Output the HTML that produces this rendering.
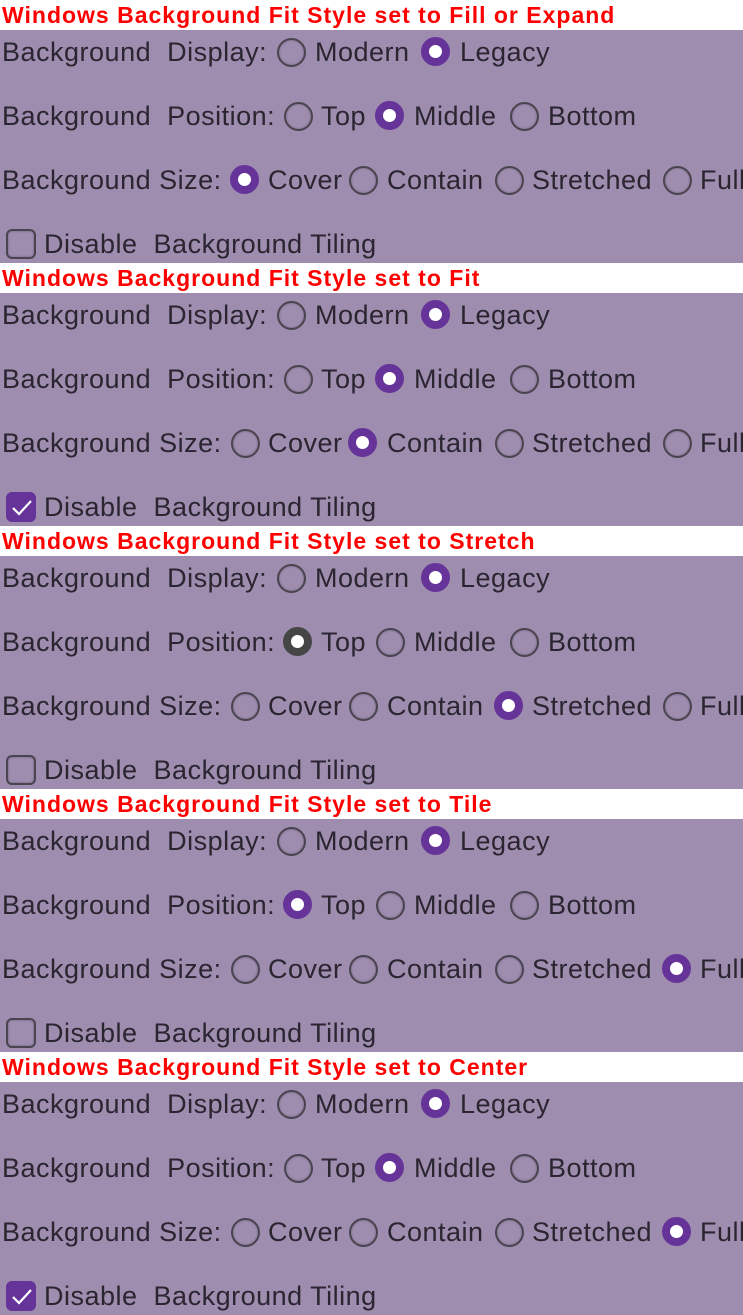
<!DOCTYPE html>
<html><head><meta charset="utf-8"><style>
*{margin:0;padding:0;box-sizing:border-box}
body{width:743px;height:1315px;background:#9f8daf;position:relative;overflow:hidden;font-family:"Liberation Sans",sans-serif}
.s{position:absolute;left:0;width:743px;height:263px}
.h{position:absolute;left:0;top:0;width:743px;height:30px;background:#fff;color:#f00;font:bold 23px/30px "Liberation Sans",sans-serif;padding-left:2px;white-space:nowrap;letter-spacing:1px}
.p{position:absolute;left:0;top:30px;width:743px;height:233px;background:#9f8daf}
.t{position:absolute;font-size:27px;line-height:32px;color:#2a2530;white-space:nowrap;letter-spacing:0.5px}
.r{position:absolute;width:29px;height:29px;border-radius:50%;border:2px solid #4a4450;box-shadow:inset 0 0 2px rgba(0,0,0,.35)}
.r.c{border:8px solid #663399;background:#fff;box-shadow:none}
.r.d{border:8px solid #454545;background:#fff;box-shadow:none}
.b{position:absolute;left:6px;width:30px;height:30px;border-radius:6px;border:2px solid #4a4450;box-shadow:inset 0 0 2px rgba(0,0,0,.35)}
.b.c{background:#663399;border-color:#663399;box-shadow:none}
.b.c svg{position:absolute;left:3px;top:4px}
</style></head><body>

<div class="s" style="top:0">
<div class="h">Windows Background Fit Style set to Fill or Expand</div><div class="p"></div>
<div class="t" style="left:2px;top:36px">Background&nbsp; Display:</div>
<div class="r" style="left:277px;top:38px"></div><div class="t" style="left:315px;top:36px">Modern</div>
<div class="r c" style="left:421px;top:37px"></div><div class="t" style="left:460px;top:36px">Legacy</div>
<div class="t" style="left:2px;top:100px">Background&nbsp; Position:</div>
<div class="r" style="left:284px;top:102px"></div><div class="t" style="left:321px;top:100px">Top</div>
<div class="r c" style="left:375px;top:101px"></div><div class="t" style="left:414px;top:100px">Middle</div>
<div class="r" style="left:510px;top:102px"></div><div class="t" style="left:548px;top:100px">Bottom</div>
<div class="t" style="left:2px;top:164px">Background Size:</div>
<div class="r c" style="left:230px;top:165px"></div><div class="t" style="left:268px;top:164px">Cover</div>
<div class="r" style="left:349px;top:166px"></div><div class="t" style="left:387px;top:164px">Contain</div>
<div class="r" style="left:495px;top:166px"></div><div class="t" style="left:532px;top:164px">Stretched</div>
<div class="r" style="left:663px;top:166px"></div><div class="t" style="left:700px;top:164px">Full</div>
<div class="b" style="top:229px"></div><div class="t" style="left:44px;top:228px">Disable&nbsp; Background Tiling</div>
</div>

<div class="s" style="top:263px">
<div class="h">Windows Background Fit Style set to Fit</div><div class="p"></div>
<div class="t" style="left:2px;top:36px">Background&nbsp; Display:</div>
<div class="r" style="left:277px;top:38px"></div><div class="t" style="left:315px;top:36px">Modern</div>
<div class="r c" style="left:421px;top:37px"></div><div class="t" style="left:460px;top:36px">Legacy</div>
<div class="t" style="left:2px;top:100px">Background&nbsp; Position:</div>
<div class="r" style="left:284px;top:102px"></div><div class="t" style="left:321px;top:100px">Top</div>
<div class="r c" style="left:375px;top:101px"></div><div class="t" style="left:414px;top:100px">Middle</div>
<div class="r" style="left:510px;top:102px"></div><div class="t" style="left:548px;top:100px">Bottom</div>
<div class="t" style="left:2px;top:164px">Background Size:</div>
<div class="r" style="left:231px;top:166px"></div><div class="t" style="left:268px;top:164px">Cover</div>
<div class="r c" style="left:348px;top:165px"></div><div class="t" style="left:387px;top:164px">Contain</div>
<div class="r" style="left:495px;top:166px"></div><div class="t" style="left:532px;top:164px">Stretched</div>
<div class="r" style="left:663px;top:166px"></div><div class="t" style="left:700px;top:164px">Full</div>
<div class="b c" style="top:229px"><svg width="22" height="20" viewBox="0 0 22 20"><path d="M2 10 L8 16 L20 3" fill="none" stroke="#fff" stroke-width="2.2"/></svg></div><div class="t" style="left:44px;top:228px">Disable&nbsp; Background Tiling</div>
</div>

<div class="s" style="top:526px">
<div class="h">Windows Background Fit Style set to Stretch</div><div class="p"></div>
<div class="t" style="left:2px;top:36px">Background&nbsp; Display:</div>
<div class="r" style="left:277px;top:38px"></div><div class="t" style="left:315px;top:36px">Modern</div>
<div class="r c" style="left:421px;top:37px"></div><div class="t" style="left:460px;top:36px">Legacy</div>
<div class="t" style="left:2px;top:100px">Background&nbsp; Position:</div>
<div class="r d" style="left:283px;top:101px"></div><div class="t" style="left:321px;top:100px">Top</div>
<div class="r" style="left:376px;top:102px"></div><div class="t" style="left:414px;top:100px">Middle</div>
<div class="r" style="left:510px;top:102px"></div><div class="t" style="left:548px;top:100px">Bottom</div>
<div class="t" style="left:2px;top:164px">Background Size:</div>
<div class="r" style="left:231px;top:166px"></div><div class="t" style="left:268px;top:164px">Cover</div>
<div class="r" style="left:349px;top:166px"></div><div class="t" style="left:387px;top:164px">Contain</div>
<div class="r c" style="left:494px;top:165px"></div><div class="t" style="left:532px;top:164px">Stretched</div>
<div class="r" style="left:663px;top:166px"></div><div class="t" style="left:700px;top:164px">Full</div>
<div class="b" style="top:229px"></div><div class="t" style="left:44px;top:228px">Disable&nbsp; Background Tiling</div>
</div>

<div class="s" style="top:789px">
<div class="h">Windows Background Fit Style set to Tile</div><div class="p"></div>
<div class="t" style="left:2px;top:36px">Background&nbsp; Display:</div>
<div class="r" style="left:277px;top:38px"></div><div class="t" style="left:315px;top:36px">Modern</div>
<div class="r c" style="left:421px;top:37px"></div><div class="t" style="left:460px;top:36px">Legacy</div>
<div class="t" style="left:2px;top:100px">Background&nbsp; Position:</div>
<div class="r c" style="left:283px;top:101px"></div><div class="t" style="left:321px;top:100px">Top</div>
<div class="r" style="left:376px;top:102px"></div><div class="t" style="left:414px;top:100px">Middle</div>
<div class="r" style="left:510px;top:102px"></div><div class="t" style="left:548px;top:100px">Bottom</div>
<div class="t" style="left:2px;top:164px">Background Size:</div>
<div class="r" style="left:231px;top:166px"></div><div class="t" style="left:268px;top:164px">Cover</div>
<div class="r" style="left:349px;top:166px"></div><div class="t" style="left:387px;top:164px">Contain</div>
<div class="r" style="left:495px;top:166px"></div><div class="t" style="left:532px;top:164px">Stretched</div>
<div class="r c" style="left:662px;top:165px"></div><div class="t" style="left:700px;top:164px">Full</div>
<div class="b" style="top:229px"></div><div class="t" style="left:44px;top:228px">Disable&nbsp; Background Tiling</div>
</div>

<div class="s" style="top:1052px">
<div class="h">Windows Background Fit Style set to Center</div><div class="p"></div>
<div class="t" style="left:2px;top:36px">Background&nbsp; Display:</div>
<div class="r" style="left:277px;top:38px"></div><div class="t" style="left:315px;top:36px">Modern</div>
<div class="r c" style="left:421px;top:37px"></div><div class="t" style="left:460px;top:36px">Legacy</div>
<div class="t" style="left:2px;top:100px">Background&nbsp; Position:</div>
<div class="r" style="left:284px;top:102px"></div><div class="t" style="left:321px;top:100px">Top</div>
<div class="r c" style="left:375px;top:101px"></div><div class="t" style="left:414px;top:100px">Middle</div>
<div class="r" style="left:510px;top:102px"></div><div class="t" style="left:548px;top:100px">Bottom</div>
<div class="t" style="left:2px;top:164px">Background Size:</div>
<div class="r" style="left:231px;top:166px"></div><div class="t" style="left:268px;top:164px">Cover</div>
<div class="r" style="left:349px;top:166px"></div><div class="t" style="left:387px;top:164px">Contain</div>
<div class="r" style="left:495px;top:166px"></div><div class="t" style="left:532px;top:164px">Stretched</div>
<div class="r c" style="left:662px;top:165px"></div><div class="t" style="left:700px;top:164px">Full</div>
<div class="b c" style="top:229px"><svg width="22" height="20" viewBox="0 0 22 20"><path d="M2 10 L8 16 L20 3" fill="none" stroke="#fff" stroke-width="2.2"/></svg></div><div class="t" style="left:44px;top:228px">Disable&nbsp; Background Tiling</div>
</div>

</body></html>
